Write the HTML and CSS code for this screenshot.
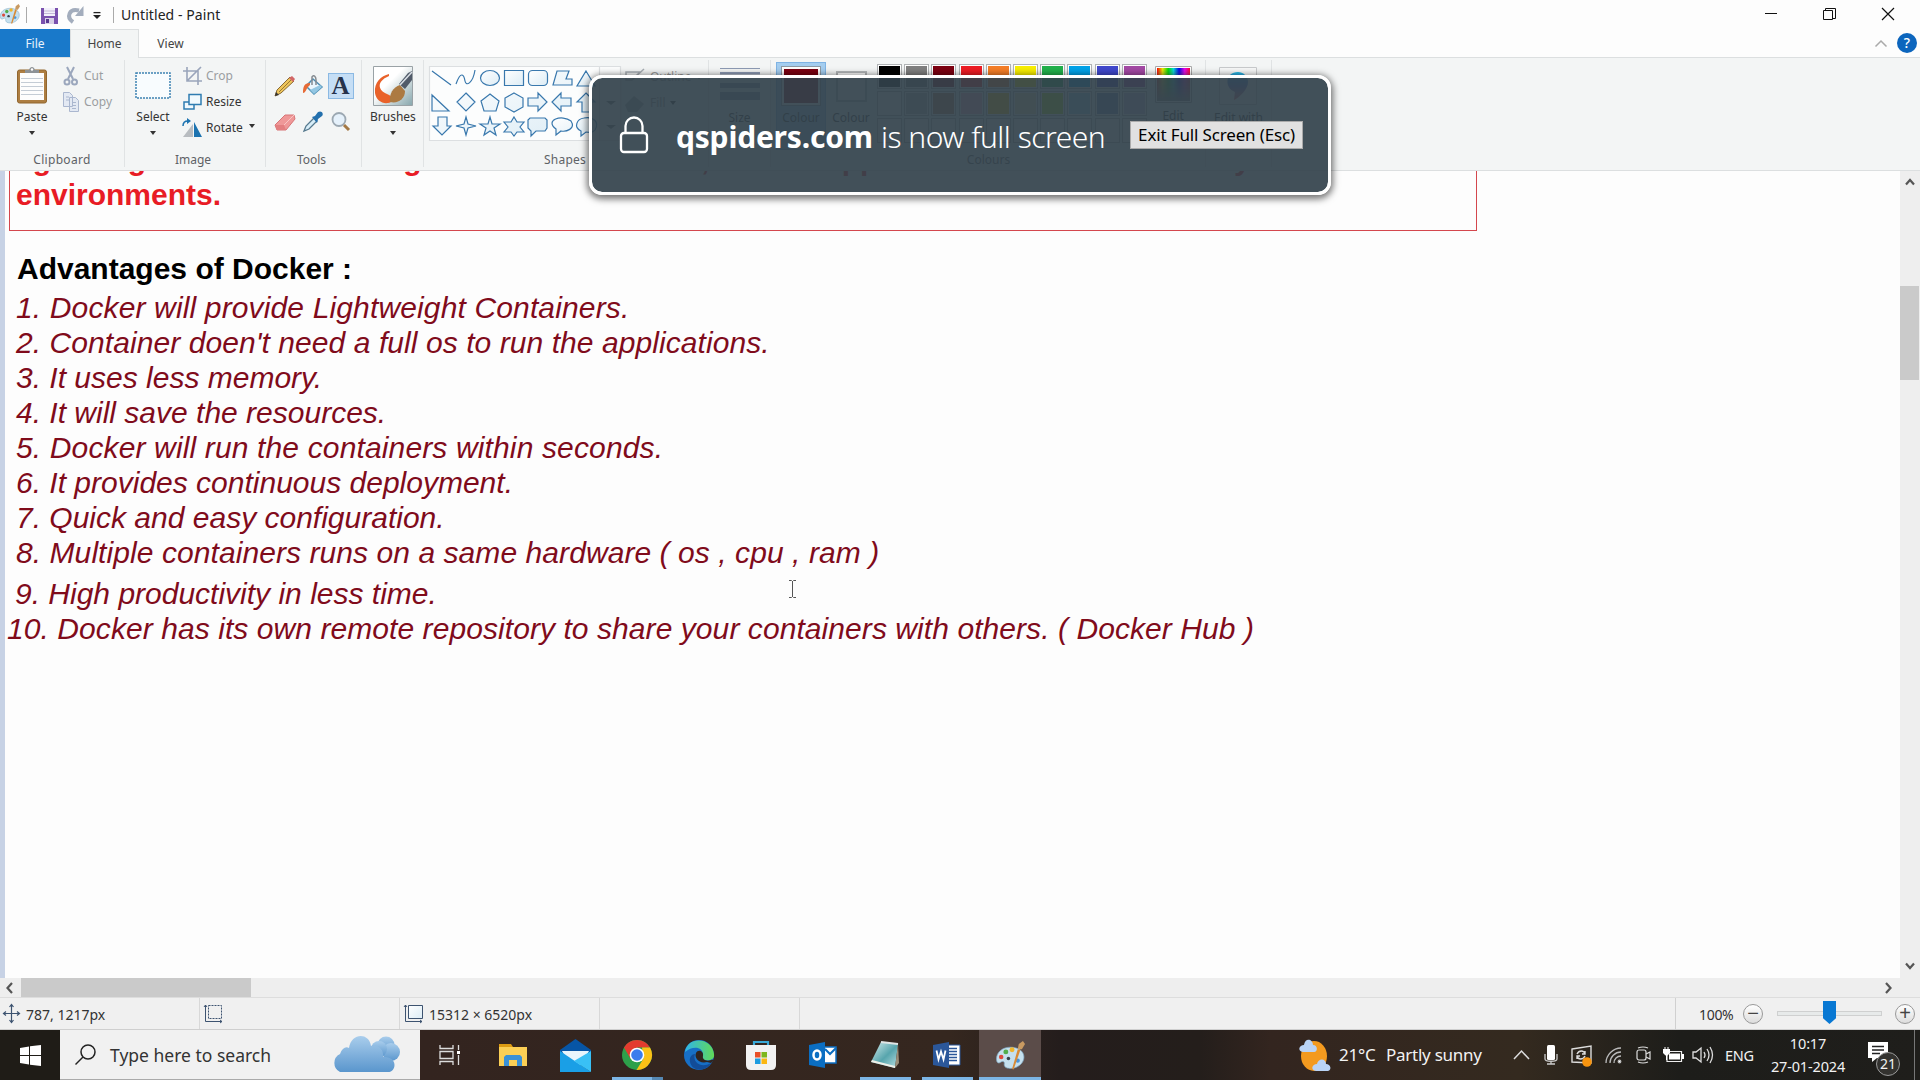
FILE: index.html
```html
<!DOCTYPE html>
<html lang="en">
<head>
<meta charset="utf-8">
<title>Untitled - Paint</title>
<link rel="stylesheet" href="styles.css">
</head>
<body>
<svg class="defs" width="0" height="0" aria-hidden="true">
  <defs>
    <linearGradient id="cloud" x1="0" y1="0" x2="0" y2="1"><stop offset="0" stop-color="#a9cdec"/><stop offset="1" stop-color="#5a96cd"/></linearGradient>
    <linearGradient id="shapeFill" x1="0" y1="0" x2="1" y2="1"><stop offset="0" stop-color="#fff"/><stop offset="1" stop-color="#dcecf5"/></linearGradient>
    <linearGradient id="rainbow"><stop offset="0" stop-color="#f00"/><stop offset=".17" stop-color="#ee0"/><stop offset=".34" stop-color="#0d0"/><stop offset=".5" stop-color="#0dd"/><stop offset=".67" stop-color="#00e"/><stop offset=".84" stop-color="#e0e"/><stop offset="1" stop-color="#f03"/></linearGradient>
    <linearGradient id="fade" x1="0" y1="0" x2="0" y2="1"><stop offset="0" stop-color="#888" stop-opacity="0"/><stop offset="1" stop-color="#888"/></linearGradient>
    <linearGradient id="edgeTop"><stop offset="0" stop-color="#2fb5ea"/><stop offset="1" stop-color="#61d957"/></linearGradient>
    <linearGradient id="brushBg" x1="0" y1="0" x2="1" y2="1"><stop offset=".4" stop-color="#fff"/><stop offset="1" stop-color="#86a6ac"/></linearGradient>
    <linearGradient id="pad" x1="0" y1="0" x2="1" y2="1"><stop offset="0" stop-color="#d8eeee"/><stop offset=".55" stop-color="#57a5ad"/><stop offset="1" stop-color="#b9dfe2"/></linearGradient>
    <linearGradient id="pin" x1="0" y1="0" x2="0" y2="1"><stop offset="0" stop-color="#22bde8"/><stop offset=".5" stop-color="#6673d8"/><stop offset="1" stop-color="#ef6b68"/></linearGradient>
    <symbol id="palette" viewBox="0 0 28 28">
      <path d="M14 6C6 6 0 11 .5 18c.2 3 2 4 4 2.500 2-1.500 4-.5 3.500 1.500-.5 3 2 4.500 6 4.500 7 0 13-5 13-11S21 6 14 6z" fill="#c5e0ee" stroke="#7fa8c4" stroke-width=".7"/>
      <circle cx="5" cy="15.500" r="2.200" fill="#dc4a3e"/><circle cx="9.500" cy="10.500" r="2.400" fill="#52ad4c"/><circle cx="15.500" cy="8.500" r="2.400" fill="#f0b52e"/><circle cx="12" cy="17" r="1.700" fill="#37434c"/><circle cx="21" cy="19" r="2" fill="#4a94d8"/>
      <path d="M15.500 27 21 8l2.500.8L17 27.500z" fill="#d98a35"/><path d="m21 8 1-5 4-3 2 3-3 5z" fill="#c99a61"/>
    </symbol>
  </defs>
</svg>

<header class="titlebar">
  <svg class="app-icon" width="20" height="20"><use href="#palette"/></svg>
  <i class="divider d1"></i>
  <svg class="save" width="17" height="16" viewBox="0 0 17 16"><path d="M0 0h17v16H0z" fill="#7a51ae"/><path d="M3 0h11v8H3z" fill="#f2effa"/><path d="M3 3h11M3 5.500h11" stroke="#c3b7d8"/><path d="M4 10h9v6H4z" fill="#d8d0e6"/><path d="M5 11h3v4H5z" fill="#5a3991"/></svg>
  <svg class="redo" width="17" height="17" viewBox="0 0 17 17"><path d="M6 16C-1 11 2 2 12 4.500" fill="none" stroke="#a3adbd" stroke-width="4"/><path d="M16.500 0v10H8z" fill="#a3adbd"/></svg>
  <svg class="more" width="8" height="7" viewBox="0 0 8 7"><path d="M.5.600h7" stroke="#222" stroke-width="1.300"/><path d="M0 3h8L4 7z" fill="#222"/></svg>
  <i class="divider d2"></i>
  <h1>Untitled - Paint</h1>
  <div class="winbtns">
    <svg width="12" height="12"><path d="M0 5.500h12" stroke="#111"/></svg>
    <svg width="13" height="13" fill="none" stroke="#111"><path d="M.5 2.500h9v9h-9zM2.500 2.500v-2h10v10h-3"/></svg>
    <svg width="12" height="12" stroke="#111" stroke-width="1.200"><path d="m0 0 12 12M12 0 0 12"/></svg>
  </div>
</header>

<nav class="tabs">
  <span class="tab file">File</span><span class="tab home">Home</span><span class="tab view">View</span>
  <div class="tab-tools">
    <svg width="12" height="7" fill="none" stroke="#aaa" stroke-width="1.500"><path d="m.5 6.500 5.500-5.500 5.500 5.500"/></svg>
    <b class="help">?</b>
  </div>
</nav>

<section class="ribbon">
  <div class="group clipboard">
    <div class="body">
      <div class="big">
        <svg width="32" height="37" viewBox="0 0 32 37"><rect x="1.500" y="3" width="29" height="33" rx="2" fill="#ad7e42" stroke="#91662f"/><path d="M4 6h24v27H4z" fill="#fdfdfd"/><path d="M5 11.500h22M5 15.500h22M5 19.500h22M5 23.500h22M5 27.500h22" stroke="#c4ccd5"/><path d="M9 6V3h4c1-4 5-4 6 0h4v3z" fill="#8d9296"/><circle cx="16" cy="2.500" r="1.200" fill="#fff"/></svg>
        <span>Paste</span><i class="caret"></i>
      </div>
      <div class="stack dim">
        <div class="cmd"><svg width="18" height="20" viewBox="0 0 18 20" fill="none" stroke="#9ba7bd" stroke-width="2"><path d="m5 1 6 12M12 1 6 13"/><circle cx="5" cy="16" r="2.500"/><circle cx="12.500" cy="16" r="2.500"/></svg><span>Cut</span></div>
        <div class="cmd"><svg width="18" height="20" viewBox="0 0 18 20" fill="#e3e9f3" stroke="#aab7cf"><path d="M1.500.5h6l3 3v11h-9zM7.500 5.500h6l3 3v11h-9z"/><path d="M10 10.500h4M10 13.500h4M10 16.500h4M4 5h3M4 8h3"/></svg><span>Copy</span></div>
      </div>
    </div>
    <div class="label">Clipboard</div>
  </div>

  <div class="group image">
    <div class="body">
      <div class="big">
        <svg width="36" height="37" viewBox="0 0 36 37"><rect x="1" y="6" width="34" height="25" fill="#f8fcfe" stroke="#3e83b3" stroke-width="1.500" stroke-dasharray="2 1"/></svg>
        <span>Select</span><i class="caret"></i>
      </div>
      <div class="stack">
        <div class="cmd dim"><svg width="19" height="18" viewBox="0 0 19 18" fill="none" stroke="#9aa5bb" stroke-width="1.600"><path d="M4 0v14h15M0 4h15v14M4 14 18 0"/></svg><span>Crop</span></div>
        <div class="cmd"><svg width="19" height="18" viewBox="0 0 19 18" fill="#f1f9fd" stroke="#2f7cb1" stroke-width="1.500"><path d="M1 9h10v7H1z"/><path d="M6 1.500h12v10H6z"/></svg><span>Resize</span></div>
        <div class="cmd"><svg width="19" height="18" viewBox="0 0 19 18"><path d="M10 5v13H0z" fill="#b8bcc0"/><path d="M11 3v15h8z" fill="#1c73b0"/><path d="M0 7c0-4 2-5 5-5" fill="none" stroke="#1c73b0" stroke-width="1.500"/><path d="m4-1 4 3-4 3z" fill="#1c73b0"/></svg><span>Rotate</span><i class="caret"></i></div>
      </div>
    </div>
    <div class="label">Image</div>
  </div>

  <div class="group tools">
    <div class="body tool-grid">
      <svg width="22" height="22" viewBox="0 0 22 22"><path d="m1 21 2-6L16 2l4 4L7 18z" fill="#eec55b" stroke="#886a34"/><path d="m15 3 4 4 2-3-3-3z" fill="#d26767"/><path d="m1 21 1-4 3 3z" fill="#333"/><path d="M5 17 17 5" stroke="#987831"/></svg>
      <svg width="22" height="22" viewBox="0 0 22 22"><path d="m11 4 9 8-8 7-8-8z" fill="#eaf6fd" stroke="#4c8eb4" stroke-width="1.500"/><path d="m18 10 2 2-8 7-4-4z" fill="#93c7e3"/><path d="M10 10V2c2-3 4 0 4 3v5" fill="none" stroke="#858b91" stroke-width="1.500"/><path d="M8 8C2 8 1 12 1 18c3 0 3-5 7-8z" fill="#e66b37"/></svg>
      <b class="text-tool">A</b>
      <svg width="22" height="22" viewBox="0 0 22 22"><path d="M1 14 11 4l9 0 1 4-9 11H3z" fill="#ef9898" stroke="#d77577"/><path d="m1 14 9 0 2 5H3z" fill="#e37f80"/><path d="m10 14 10-10" stroke="#f9c5c3"/></svg>
      <svg width="22" height="22" viewBox="0 0 22 22"><path d="m2 20 2-5 8-8 3 3-8 8z" fill="#d7edf8" stroke="#56798e" stroke-width="1.300"/><path d="m10 6 3-1 3-4c4-2 6 2 4 4l-4 3-1 4z" fill="#2370ad"/></svg>
      <svg width="22" height="22" viewBox="0 0 22 22"><circle cx="9" cy="8.500" r="6.500" fill="#e5f1fb" stroke="#9ca8b2" stroke-width="1.800"/><path d="m14 14 5 5" stroke="#a37845" stroke-width="3"/></svg>
    </div>
    <div class="label">Tools</div>
  </div>

  <div class="group brushes">
    <div class="body"><div class="big">
      <svg width="40" height="40" viewBox="0 0 40 40"><path d="M.5.500h39v39H.5z" fill="url(#brushBg)" stroke="#9aa2a6"/><path d="M16 8C8 10 1 16 2 27c1 7 7 11 13 10 7-1 5-7-1-9-8-3-12-12 2-18z" fill="#e9622a"/><path d="M17 36c-1-8 3-15 10-17l5 6c0 8-7 13-15 11z" fill="#ac7a42"/><path d="m26 18 9-11 4-2v9l-7 9z" fill="#515b69"/><path d="m27 19 12-13" stroke="#dae0e6" stroke-width="1.500"/></svg>
      <span>Brushes</span><i class="caret"></i>
    </div></div>
  </div>

  <div class="group shapes">
    <div class="body">
      <svg class="gallery" width="192" height="75" viewBox="0 0 192 75" fill="url(#shapeFill)" stroke="#3978ad" stroke-width="1.200">
        <path d="M.5.500h191v74H.5z" fill="#fcfdfd" stroke="#dcdfe1"/><path d="M170.500 1v73" stroke="#dcdfe1"/>
        <path d="m3 5 19 14M27 18c5-14 8-9 9-3s8 2 10-11" fill="none"/><ellipse cx="61" cy="12" rx="9.500" ry="7.500"/><path d="M75.500 4.500h19v15h-19z"/><rect x="99.500" y="4.500" width="19" height="15" rx="4"/><path d="m128 5 12 0-3 8 6 0v6h-19zM157 5l9 15h-18zM3 29v16h17zM37 27l9 9-9 9-9-9zM61 28l9 7-3 10H55l-3-10zM85 27l9 5v9l-9 5-9-5v-9zM99 32h10v-5l9 9-9 9v-5H99zM142 32h-10v-5l-9 9 9 9v-5h10zM157 27l9 9h-5v10h-8V36h-5zM9 51h9v9h4l-9 9-9-9h5zM37 51l2 7 8 2-8 2-2 7-2-7-8-2 8-2zM61 51l2 7h8l-6 4 2 7-6-4-6 4 2-7-6-4h8zM85 51l3 5h7l-4 5 4 5h-7l-3 4-3-4h-7l4-5-4-5h7zM101 52h15l2 2v8l-2 3h-9l-5 5v-5l-3-3v-8z"/><path d="M127 69v-6c-12-9 6-15 15-8 5 8-5 11-10 10zM152 70v-5c-8-4-4-12 3-13 9-2 16 4 11 12-3 4-6 2-9 2z"/>
        <path d="m177 35 5 4 5-4zM177 59l5 4 5-4z" fill="#777" stroke="none"/>
      </svg>
      <div class="stack shape-opts">
        <div class="cmd"><svg width="22" height="18" viewBox="0 0 22 18" fill="none" stroke="#a7adb3" stroke-width="1.500"><path d="M2 4h14L8 12H2zM8 12 20 1"/></svg><span>Outline</span><i class="caret"></i></div>
        <div class="cmd"><svg width="22" height="18" viewBox="0 0 22 18"><path d="m1 11 9-9 10 8-7 8H4z" fill="#a7adb3"/></svg><span>Fill</span><i class="caret"></i></div>
      </div>
    </div>
    <div class="label">Shapes</div>
  </div>

  <div class="group size"><div class="body"><div class="big">
    <svg width="40" height="40" fill="#8d9ab3"><path d="M0 1h40v1H0zM0 5h40v2.500H0zM0 16h40v5H0zM0 25h40v8H0z"/></svg><span>Size</span>
  </div></div></div>

  <div class="group colours">
    <div class="body">
      <div class="swatch-btn active"><i class="chip primary"></i><span>Colour</span></div>
      <div class="swatch-btn"><i class="chip secondary"></i><span>Colour</span></div>
      <div class="pal">
        <i class="c0"></i><i class="c1"></i><i class="c2"></i><i class="c3"></i><i class="c4"></i><i class="c5"></i><i class="c6"></i><i class="c7"></i><i class="c8"></i><i class="c9"></i>
        <i class="c10"></i><i class="c11"></i><i class="c12"></i><i class="c13"></i><i class="c14"></i><i class="c15"></i><i class="c16"></i><i class="c17"></i><i class="c18"></i><i class="c19"></i>
        <i></i><i></i><i></i><i></i><i></i><i></i><i></i><i></i><i></i><i></i>
      </div>
      <div class="big edit"><svg width="37" height="37"><path d="M.5.500h36v36H.5z" fill="#fff" stroke="#aaa"/><path d="M2 2h33v33H2z" fill="url(#rainbow)"/><path d="M2 2h33v33H2z" fill="url(#fade)"/></svg><span>Edit</span></div>
    </div>
    <div class="label">Colours</div>
  </div>

  <div class="group paint3d"><div class="body"><div class="big">
    <svg width="38" height="38"><path d="M.5.500h37v37H.5z" fill="#f7f8f8" stroke="#c8cacc"/><path d="M19 5c-13 0-14 16-3 20l-1 8c6-3 14-11 14-18 0-6-5-10-10-10z" fill="url(#pin)"/></svg><span>Edit with</span>
  </div></div></div>
</section>

<main class="workspace">
  <div class="canvas">
    <div class="boxed">
      <p class="clipped"><span>lightweight</span><span>running</span><span>,</span><span>applications</span><span>any</span></p>
      <p>environments.</p>
    </div>
    <h2>Advantages of Docker :</h2>
    <div class="points">
      <p class="wide">1. Docker will provide Lightweight Containers.</p>
      <p class="loose">2. Container doen't need a full os to run the applications.</p>
      <p>3. It uses less memory.</p>
      <p>4. It will save the resources.</p>
      <p class="wide">5. Docker will run the containers within seconds.</p>
      <p>6. It provides continuous deployment.</p>
      <p>7. Quick and easy configuration.</p>
      <p class="loose">8. Multiple containers runs on a same hardware ( os , cpu , ram )</p>
      <p class="nine">9. High productivity in less time.</p>
      <p class="ten loose">10. Docker has its own remote repository to share your containers with others. ( Docker Hub )</p>
    </div>
    <svg class="cursor" width="9" height="18" fill="none" stroke="#555"><path d="M1 .5h2.500l1 1 1-1H8M1 17.500h2.500l1-1 1 1H8M4.500 1v16"/></svg>
  </div>
  <div class="vscroll">
    <svg width="10" height="8" fill="none" stroke="#555" stroke-width="2.200"><path d="m1 6.500 4-4.500 4 4.500"/></svg>
    <i></i>
    <svg class="down" width="10" height="8" fill="none" stroke="#555" stroke-width="2.200"><path d="m1 1.500 4 4.500 4-4.500"/></svg>
  </div>
</main>
<div class="hscroll">
  <svg width="7" height="12" fill="none" stroke="#555" stroke-width="2.200"><path d="M6 1 1.500 6 6 11"/></svg>
  <i></i>
  <svg class="right" width="7" height="12" fill="none" stroke="#555" stroke-width="2.200"><path d="M1 1 5.500 6 1 11"/></svg>
</div>

<footer class="status">
  <div class="cell"><svg width="17" height="19" viewBox="0 0 17 19" stroke="#3d5370" fill="none" stroke-width="1.200"><path d="M8.500 1v17M1 9.500h15M6.500 3l2-2.500 2 2.500M6.500 16l2 2.500 2-2.500M3 7.500.5 9.500 3 11.500M14 7.500l2.500 2-2.500 2"/></svg><span class="pos">787, 1217px</span></div>
  <div class="cell"><svg width="19" height="19" viewBox="0 0 19 19" fill="none" stroke="#3d5370"><path d="M4.500 1.500h13v13h-13z" stroke-dasharray="2 1"/><path d="M1.500 1v16.500H18M0 3l1.500-2L3 3M16 16l2 1.500-2 1.500"/></svg></div>
  <div class="cell"><svg width="19" height="19" viewBox="0 0 19 19" fill="none" stroke="#3d5370"><path d="M4.500 1.500h14v13h-14z" fill="url(#shapeFill)"/><path d="M1.500 1v16.500H18M0 3l1.500-2L3 3M16 16l2 1.500-2 1.500"/></svg><span class="dims">15312 × 6520px</span></div>
  <div class="cell"></div>
  <div class="rest"></div>
  <div class="zoom">
    <span>100%</span>
    <b class="round">−</b>
    <div class="track"><i></i></div>
    <b class="round">+</b>
  </div>
</footer>

<div class="taskbar">
  <div class="start"><svg width="21" height="21" viewBox="0 0 21 21" fill="#fff"><path d="m0 3 9-1.500V10H0zM10 1.300 21 0v10H10zM0 11h9v8.500L0 18zM10 11h11v10L10 19.700z"/></svg></div>
  <div class="search">
    <svg width="21" height="21" viewBox="0 0 21 21" fill="none" stroke="#222" stroke-width="1.500"><circle cx="13" cy="8" r="7"/><path d="m8 13-7.500 7.500"/></svg>
    <span>Type here to search</span>
    <svg class="clouds" width="70" height="38" viewBox="0 0 70 36" fill="url(#cloud)"><circle cx="55" cy="9" r="8.500"/><circle cx="60" cy="16" r="9"/><circle cx="48" cy="13" r="8"/><path d="M9 36a10 10 0 0 1 0-18C11 12 15 10 18 12 20-3 38-4 40 10c8-1 13 4 12 11 15-1 14 15 5 15z"/></svg>
  </div>
  <div class="apps">
    <div class="app"><svg class="taskview" width="22" height="20" fill="none" stroke="#ddd" stroke-width="1.300"><path d="M1 0v3.500h13V0M1 6.500h13v7H1zM1 20v-3.500h13V20M19.500 0v5M19.500 10v10"/><path d="M18 6h3v3h-3z" fill="#fff" stroke="none"/></svg></div>
    <div class="app"><svg width="28" height="24" viewBox="0 0 28 24"><path d="M0 1h12l2 3H0z" fill="#dc9b13"/><path d="M0 4h28v19H0z" fill="#fbcf55"/><path d="M5 23v-9l2-2h14l2 2v9h-5v-6h-8v6z" fill="#3a91d6"/></svg></div>
    <div class="app"><svg width="31" height="33" viewBox="0 0 31 33"><path d="M0 11 15.500 0 31 11v6H0z" fill="#0755a5"/><path d="M2 12h27l-8 14H9z" fill="#e8f5fc"/><path d="M0 12 31 33H0z" fill="#1a9fe6"/><path d="M31 12v21L14 22z" fill="#39c0f5"/></svg></div>
    <div class="app open grouped"><svg width="30" height="30" viewBox="0 0 30 30"><circle cx="15" cy="15" r="15" fill="#2da04a"/><path d="M15 0a15 15 0 0 1 13 7.500H15L8.500 18.800 2 7.500A15 15 0 0 1 15 0z" fill="#e33b2e"/><path d="M28 7.500A15 15 0 0 1 14.500 30l7-11.500L20 7.500z" fill="#fbc116"/><circle cx="15" cy="15" r="7.300" fill="#fff"/><circle cx="15" cy="15" r="5.800" fill="#3b7ded"/></svg></div>
    <div class="app"><svg width="30" height="30" viewBox="0 0 30 30"><circle cx="15" cy="15" r="15" fill="#176fc6"/><path d="M1 12C3-4 28-3 30 14c1 6-5 7-10 6-3-1-2-3-1-5C19 6 8 6 1 12z" fill="url(#edgeTop)"/><path d="M11 14c-3 8 6 15 16 9-5 9-19 9-21-1-1-5 2-8 5-8z" fill="#124c98"/><path d="M12 13c-2 5 3 11 11 9l4 1c3-2 3-4 0-3-5 2-9-1-8-4 1-5-5-7-7-3z" fill="#30241f"/></svg></div>
    <div class="app"><svg width="30" height="30" viewBox="0 0 30 30"><path d="M8 6V2h14v4" fill="none" stroke="#3aa9d8" stroke-width="2.200"/><path d="M0 5h30v20q0 5-5 5H5q-5 0-5-5z" fill="#f2f2f2"/><path d="M9 12h5.500v5.500H9z" fill="#e94f27"/><path d="M15.500 12H21v5.500h-5.500z" fill="#7db71e"/><path d="M9 18.500h5.500V24H9z" fill="#1d9ce0"/><path d="M15.500 18.500H21V24h-5.500z" fill="#fbb713"/></svg></div>
    <div class="app"><svg width="28" height="28" viewBox="0 0 28 28"><path d="M15 6h12v16H15z" fill="#fff" stroke="#0b6ec2" stroke-width="1.500"/><path d="m16 8 5 5 6-6" fill="none" stroke="#0b6ec2" stroke-width="2"/><path d="m0 4 16-3v26L0 24z" fill="#0b6ec2"/><ellipse cx="8" cy="14" rx="3.500" ry="4.500" fill="none" stroke="#fff" stroke-width="2.500"/></svg></div>
    <div class="app open"><svg width="28" height="28" viewBox="0 0 28 28"><path d="m10 1 17 2-3 24L0 21z" fill="url(#pad)"/><path d="m27 3 1 19-4 5z" fill="#9b8e79"/><path d="m0 21 24 6v-2L1 19z" fill="#efefe8"/><path d="m10 1 17 2" stroke="#e0e5e5" stroke-width="2"/></svg></div>
    <div class="app open"><svg width="28" height="28" viewBox="0 0 28 28"><path d="M14 4h13v20H14z" fill="#fff" stroke="#2b579a"/><path d="M16 7.500h8M16 10.500h8M16 13.500h8M16 16.500h8M16 19.500h8" stroke="#2b579a" stroke-width="1.500"/><path d="m0 4 16-3v26L0 24z" fill="#2b579a"/><path d="m3.500 9.500 2 9 2.500-8 2.500 8 2-9" fill="none" stroke="#fff" stroke-width="1.800"/></svg></div>
    <div class="app open current"><svg width="29" height="29"><use href="#palette"/></svg></div>
  </div>
  <div class="weather">
    <svg width="31" height="35" viewBox="0 0 31 33"><ellipse cx="15" cy="17" rx="13" ry="15" fill="#f39a1f"/><path d="M4 13c-6-1-4-7 1-7 1-8 9-6 9 0 5 0 5 7 1 7zM17 32c-6-1-4-7 1-7 1-6 9-6 9 0 5 0 6 6 2 7z" fill="#b9d3f5"/></svg>
    <span class="temp">21°C</span><span class="sky">Partly sunny</span>
  </div>
  <div class="tray">
    <svg class="t1" width="17" height="10" fill="none" stroke="#ddd" stroke-width="1.500"><path d="m1 9 7.500-8L16 9"/></svg>
    <svg class="t2" width="14" height="22" viewBox="0 0 14 20"><rect x="3" width="8" height="15" rx="1.500" fill="#fff"/><path d="M1 9v5c0 3 12 3 12 0V9M7 16v3M3 19h8" fill="none" stroke="#ccc" stroke-width="1.300"/></svg>
    <svg class="t3" width="22" height="21" viewBox="0 0 22 21"><path d="M1 4 20 1v17L1 17zM6 9c2-4 7-4 8 0M14 6v3h-3M14 11c-2 4-7 4-8 0M6 14v-3h3" fill="none" stroke="#ddd" stroke-width="1.400"/><circle cx="16" cy="17" r="4.800" fill="#f7940f"/></svg>
    <svg class="t4" width="17" height="17" viewBox="0 0 17 17" fill="none" stroke="#bbb" stroke-width="1.300"><path d="M1 16C1 8 8 1 16 1M5 16c0-6 5-11 11-11M9 16c0-4 3-7 7-7"/><circle cx="14.500" cy="14.500" r="1.300" fill="#fff"/></svg>
    <svg class="t5" width="16" height="20" viewBox="0 0 16 18" fill="none" stroke="#ddd" stroke-width="1.200"><rect x="1" y="4" width="9" height="10" rx="2"/><path d="m10 8 4-2v7l-4-2M2 2q5-2 10 0M2 16q5 2 10 0"/></svg>
    <svg class="t6" width="21" height="16" viewBox="0 0 21 16"><path d="M4 4.500h14.500v10H4z" fill="none" stroke="#eee" stroke-width="1.200"/><path d="M6 6.500h11v6H6zM19 7h2v5h-2z" fill="#fff"/><path d="M0 2h7v4L4.500 8.500h-2L0 6z" fill="#fff"/><path d="M2 0v3M5 0v3M3.500 8v5" stroke="#fff"/></svg>
    <svg class="t7" width="22" height="18" viewBox="0 0 22 18" fill="none" stroke="#ddd" stroke-width="1.300"><path d="M1 6h3l5-4v14l-5-4H1zM12 6q2 3 0 6M15 3q4 6 0 12M18 1q5 8 0 16"/></svg>
    <span class="lang">ENG</span>
    <div class="clock"><span class="time">10:17</span><span class="date">27-01-2024</span></div>
    <div class="notify"><svg width="20" height="20" viewBox="0 0 20 20"><path d="M0 0h20v16H9l-5 4v-4H0z" fill="#fff"/><path d="M4 4.500h12M4 8h12M4 11.500h8" stroke="#222" stroke-width="1.300"/></svg><b>21</b></div>
    <i class="peek"></i>
  </div>
</div>

<div class="toast">
  <svg width="30" height="38" viewBox="0 0 30 38" fill="none" stroke="#fff" stroke-width="2.300"><rect x="2" y="17" width="26" height="19" rx="3"/><path d="M6.500 17v-7a8.500 8.500 0 0 1 17 0v7"/></svg>
  <b>qspiders.com</b><span>is now full screen</span><button>Exit Full Screen (Esc)</button>
</div>
</body>
</html>
```
FILE: styles.css
```css
* { box-sizing: border-box; margin: 0; padding: 0; }
body { width: 1920px; height: 1080px; overflow: hidden; display: flex; flex-direction: column; background: #fdfdfd; font: 12px/16px "Noto Sans", "Open Sans", sans-serif; color: #333; position: relative; }
svg { display: block; flex: none; overflow: visible; }
.defs { position: absolute; }
i { display: block; flex: none; }
span, b, h1 { white-space: nowrap; }

.titlebar { height: 29px; flex: none; display: flex; align-items: center; }
.app-icon { margin-top: -1px; }
.divider { width: 1px; height: 16px; background: #aaa; }
.d1 { margin-left: 6px; }
.save { margin: 2px 0 0 14px; }
.redo { margin: 0 0 0 9px; }
.more { margin: 2px 0 0 9px; }
.d2 { margin-left: 12px; }
.titlebar h1 { font-size: 14px; font-weight: 400; margin-left: 7px; color: #222; letter-spacing: .07px; }
.winbtns { margin: -1px 26px 0 auto; display: flex; gap: 46px; align-items: center; }

.tabs { height: 29px; flex: none; display: flex; align-items: stretch; border-bottom: 1px solid #dcdfe0; line-height: 29px; }
.tab { text-align: center; color: #444; }
.file { width: 70px; background: #1979ca; color: #e8f2fb; height: 28px; }
.home { width: 69px; background: #f3f5f5; border: 1px solid #dcdfe0; border-bottom: 0; height: 29px; line-height: 28px; }
.view { width: 63px; }
.tab-tools { margin: 0 3px 0 auto; display: flex; align-items: center; gap: 10px; }
.help { width: 20px; height: 20px; border-radius: 50%; background: #0c65bd; color: #fff; font-size: 14px; line-height: 20px; text-align: center; font-weight: 500; }

.ribbon { height: 113px; flex: none; background: #f3f5f5; border-bottom: 1px solid #dcdfe0; display: flex; }
.group { display: flex; flex-direction: column; border-right: 1px solid #e0e3e4; margin: 2px 0 4px; height: 107px; flex: none; }
.body { height: 91px; display: flex; align-items: flex-start; flex: none; }
.label { text-align: center; color: #5e6266; line-height: 16px; margin-top: 1px; }
.big { display: flex; flex-direction: column; align-items: center; }
.caret { border: 3.500px solid transparent; border-top: 4px solid #333; border-bottom: 0; }
.big span { margin-top: 5px; }
.big .caret { margin-top: 6px; }
.dim { color: #9b9ea1; }
.stack { display: flex; flex-direction: column; }
.cmd { display: flex; align-items: center; height: 26px; gap: 4px; }
.clipboard { width: 125px; }
.clipboard .big { margin: 7px 0 0 16px; }
.clipboard .stack { margin: 3px 0 0 14px; }
.clipboard .label { letter-spacing: .3px; }
.image { width: 141px; }
.image .big { margin: 7px 0 0 10px; }
.image .stack { margin: 3px 0 0 12px; }
.image .cmd .caret { margin-left: 2px; margin-top: -4px; }
.image .label { padding-right: 4px; }
.tools { width: 96px; }
.tools .label { padding-right: 4px; }
.tool-grid { display: grid; grid-template-columns: 22px 26px 22px; grid-template-rows: 26px 26px; gap: 10px 4px; padding: 13px 0 0 8px; justify-items: center; align-items: center; }
.text-tool { width: 26px; height: 26px; background: #c5def5; border: 1px solid #8bb9e3; font: bold 25px/24px "Liberation Serif", serif; color: #26334c; text-align: center; margin-left: -1px; }
.brushes { width: 62px; }
.brushes .big { margin: 6px auto 0 8px; }
.brushes .big span { margin-top: 3px; }
.shapes { width: 285px; }
.shapes .body { padding: 6px 0 0 5px; }
.shapes .label { letter-spacing: .2px; padding-right: 2px; }
.shape-opts { margin: -2px 0 0 3px; color: #999; }
.size { width: 62px; }
.size .big, .paint3d .big { margin: 7px auto 0; }
.size .big span { margin-top: 3px; }
.colours { width: 435px; }
.swatch-btn { width: 50px; height: 88px; margin: 2px 0 0 5px; display: flex; flex-direction: column; align-items: center; }
.active { background: #a4cdef; border: 1px solid #7eb3e4; }
.chip { border: 1px solid #999; }
.primary { width: 40px; height: 40px; margin-top: 3px; background: #7c0011; border: 1px solid #8e9ba5; box-shadow: inset 0 0 0 2px #fff; margin-bottom: 4px; }
.swatch-btn + .swatch-btn { margin-left: 0; }
.secondary { width: 31px; height: 31px; margin: 9px 0 8px; background: #fff; border: 2px solid #b5b8ba; }
.pal { display: grid; grid-template-columns: repeat(10, 25px); grid-auto-rows: 25px; gap: 2px 2.200px; margin: 4px 0 0 1px; }
.pal i { border: 1px solid #b0b3b5; background: var(--c, #f8f9f9); box-shadow: inset 0 0 0 1px #fff; }
.c0 { --c: #000; } .c1 { --c: #7f7f7f; } .c2 { --c: #7c0011; } .c3 { --c: #ed1c24; } .c4 { --c: #f57e27; } .c5 { --c: #f8ee00; } .c6 { --c: #22b14c; } .c7 { --c: #00a2e8; } .c8 { --c: #3f48cc; } .c9 { --c: #a349a4; }
.c10 { --c: #fff; } .c11 { --c: #c3c3c3; } .c12 { --c: #b97a57; } .c13 { --c: #ffaec9; } .c14 { --c: #ffc90e; } .c15 { --c: #efe4b0; } .c16 { --c: #b5e61d; } .c17 { --c: #99d9ea; } .c18 { --c: #7092be; } .c19 { --c: #c8bfe7; }
.edit { margin: 6px 0 0 8px; }
.colours .label { padding-left: 1px; }
.paint3d { width: 66px; }

.workspace { height: 807px; flex: none; display: flex; background: #c7d2e5; padding-left: 5px; }
.canvas { width: 1895px; height: 807px; flex: none; background: #fdfdfd; overflow: hidden; position: relative; font: 30px/35px "Liberation Sans", Arial, sans-serif; }
.canvas p, .canvas h2 { white-space: nowrap; font-size: 30px; }
.boxed { width: 1468px; height: 90px; margin: -30px 0 0 4px; border: 1px solid #d4474d; border-top: 0; color: #e81c25; font-weight: bold; padding: 1px 0 0 6px; }
.clipped { display: grid; grid-template-columns: 294px 391px 124px 374px auto; }
.canvas h2 { margin: 20px 0 0 12px; color: #000; }
.points { margin: 4px 0 0 11px; font-style: italic; color: #800b1b; }
.canvas .wide { letter-spacing: .14px; }
.canvas .loose { letter-spacing: .07px; }
.nine { margin: 6px 0 0 -1px; }
.ten { margin-left: -9px; }
.cursor { position: absolute; left: 783px; top: 409px; }
.vscroll { width: 20px; background: #eeeeee; display: flex; flex-direction: column; align-items: center; padding-top: 7px; flex: none; }
.vscroll i { width: 19px; height: 94px; background: #cacaca; margin: 100px 1px 0 0; }
.vscroll .down { margin: auto 0 8px; }
.hscroll { height: 20px; flex: none; background: #eeeeee; display: flex; align-items: center; padding: 0 28px 0 6px; border-bottom: 1px solid #ddd; }
.hscroll i { width: 230px; height: 19px; background: #cacaca; margin-left: 8px; }
.hscroll .right { margin-left: auto; }

.status { height: 32px; flex: none; background: #f0f0f0; display: flex; border-bottom: 1px solid #cfcfcf; font-size: 14px; }
.cell { width: 200px; border-right: 1px solid #d8d8d8; display: flex; align-items: center; padding: 0 0 0 3px; gap: 6px; flex: none; }
.cell + .cell { padding-left: 4px; }
.cell span { margin-top: 2px; }
.cell svg { margin-bottom: 1px; }
.rest { flex: 1; }
.zoom { width: 245px; border-left: 1px solid #d0d0d0; display: flex; align-items: center; padding-left: 23px; }
.zoom span { width: 44px; margin-top: 3px; letter-spacing: -.3px; }
.round { width: 20px; height: 20px; border: 1px solid #999; border-radius: 50%; background: linear-gradient(#fff, #ddd); font: 20px/17px "Liberation Sans", sans-serif; text-align: center; color: #444; }
.track { width: 105px; height: 5px; border: 1px solid #cfd0d0; background: #e7eaea; margin: 0 13px 0 14px; position: relative; flex: none; }
.track i { position: absolute; left: 45px; top: -11px; width: 13px; height: 23px; background: #0878d3; clip-path: polygon(0 0, 100% 0, 100% 75%, 50% 100%, 0 75%); }

.taskbar { height: 50px; flex: none; display: flex; color: #f2f2f2; background: linear-gradient(90deg, #1f1c17 0, #1f1c17 60px, #33241f 420px, #35271f 950px, #241d1c 1060px, #241e1b 1200px, #33251f 1270px, #342a1f 1520px, #1d1d1a 1680px, #1f1e1b 1920px); }
.start { width: 60px; display: flex; align-items: center; padding-left: 20px; }
.search { width: 360px; background: #f1f1f1; border-bottom: 1px solid #aaa; display: flex; align-items: center; padding-left: 15px; color: #333; font-size: 17.500px; }
.search span { margin: 1px 0 0 14px; width: 165px; }
.clouds { margin: -2px 0 0 56px; }
.apps { display: flex; width: 620px; }
.app { width: 62px; display: flex; align-items: center; justify-content: center; flex: none; }
.taskview { margin-right: 3px; }
.open { background: linear-gradient(#7cb5e5, #7cb5e5) center bottom / 51px 3px no-repeat; }
.grouped { background: linear-gradient(90deg, #7cb5e5 40px, #5688b3 40px) center bottom / 51px 3px no-repeat; }
.current { background: linear-gradient(#7cb5e5, #7cb5e5) center bottom / 62px 3px no-repeat, #5b4c49; margin-left: 1px; }
.weather { display: flex; align-items: center; width: 214px; margin-left: 259px; font-size: 17px; }
.temp { width: 38px; margin-left: 9px; }
.sky { margin-left: 9px; }
.weather span { letter-spacing: -.25px; }
.tray { display: flex; align-items: center; flex: 1; }
.t2 { margin-left: 14px; } .t3 { margin-left: 13px; } .t4 { margin-left: 12px; } .t5 { margin-left: 14px; } .t6 { margin-left: 11px; } .t7 { margin-left: 8px; }
.lang { font-size: 14.500px; margin-left: 11px; width: 30px; letter-spacing: -.3px; }
.clock { margin: -1px 0 0 14px; width: 78px; display: flex; flex-direction: column; align-items: center; font-size: 14.500px; line-height: 23px; letter-spacing: -.15px; }
.notify { margin: -6px 0 0 21px; position: relative; }
.notify b { position: absolute; left: 8px; top: 10px; width: 24px; height: 24px; border: 1px solid #999; border-radius: 50%; background: #33322f; font-size: 14px; line-height: 22px; text-align: center; font-weight: 400; }
.peek { width: 1px; height: 50px; background: #777; margin-left: auto; margin-right: 5px; }

.toast { position: absolute; left: 589px; top: 75px; width: 742px; height: 120px; border: 3px solid #fff; border-radius: 13px; background: rgba(50, 65, 75, .92); background-clip: padding-box; box-shadow: 0 2px 7px 2px rgba(0, 0, 0, .55); display: flex; align-items: center; padding-left: 27px; color: #fff; font-size: 30px; line-height: 40px; }
.toast b { margin: 3px 0 0 27px; width: 196px; letter-spacing: -.2px; }
.toast span { margin: 3px 0 0 9px; width: 224px; font-weight: 300; letter-spacing: -.5px; }
.toast button { margin: -1px 0 0 25px; width: 173px; height: 28px; border: 1px solid #aaa; background: #e1e1e1; color: #000; font: 17px/25px "Noto Sans", sans-serif; letter-spacing: -.15px; white-space: nowrap; display: flex; justify-content: center; }
```
